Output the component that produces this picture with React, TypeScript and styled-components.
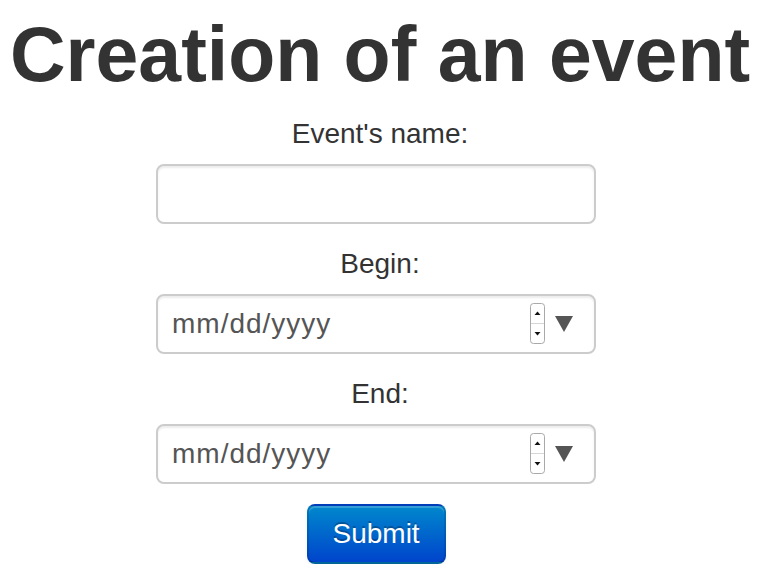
import React from "react";
import styled, { createGlobalStyle } from "styled-components";

const GlobalStyle = createGlobalStyle`
  html, body { margin: 0; padding: 0; background: #fff; }
  body { font-family: "Liberation Sans", Arial, Helvetica, sans-serif; color: #333; }
`;

const Page = styled.div`
  width: 760px;
  display: flex;
  flex-direction: column;
  align-items: center;
  padding-top: 14px;
`;

const Title = styled.h1`
  margin: 0 0 20px;
  font-size: 77px;
  line-height: 80px;
  font-weight: bold;
  color: #333;
  white-space: nowrap;
`;

const Form = styled.form`
  display: flex;
  flex-direction: column;
  align-items: center;
  margin: 0;
`;

const Label = styled.label`
  display: block;
  font-size: 28px;
  line-height: 40px;
  margin-bottom: 10px;
  color: #333;
`;

const fieldBox = `
  width: 440px;
  height: 60px;
  box-sizing: border-box;
  border: 2px solid #ccc;
  border-radius: 8px;
  background: #fff;
  box-shadow: inset 0 2px 2px rgba(0, 0, 0, 0.075);
  margin: 0 8px 20px 0;
`;

const TextInput = styled.input`
  ${fieldBox}
  padding: 8px 12px;
  font-family: inherit;
  font-size: 28px;
  line-height: 40px;
  color: #555;
  outline: none;
`;

const DateBox = styled.div`
  ${fieldBox}
  display: flex;
  align-items: center;
  padding: 0 12px 0 14px;
`;

const DateText = styled.input`
  flex: 1;
  min-width: 0;
  border: none;
  outline: none;
  background: transparent;
  padding: 0;
  font-family: inherit;
  font-size: 28px;
  line-height: 40px;
  letter-spacing: 1px;
  color: #555;
  &::placeholder { color: #555; opacity: 1; }
`;

const SpinnerSvg = styled.svg`
  display: block;
  flex: none;
  margin-right: 10px;
  margin-top: -2px;
`;

const DropSvg = styled.svg`
  display: block;
  flex: none;
  margin-right: 9px;
  margin-top: -1px;
`;

const SubmitButton = styled.button`
  box-sizing: border-box;
  width: 139px;
  height: 60px;
  margin: 0 8px 0 0;
  padding: 8px 24px;
  font-family: inherit;
  font-size: 28px;
  line-height: 40px;
  color: #fff;
  text-shadow: 0 -2px 0 rgba(0, 0, 0, 0.25);
  background: linear-gradient(to bottom, #0088cc, #0044cc);
  border: 2px solid;
  border-color: rgba(0, 0, 0, 0.1) rgba(0, 0, 0, 0.1) rgba(0, 0, 0, 0.25);
  border-radius: 8px;
  box-shadow: inset 0 2px 0 rgba(255, 255, 255, 0.2), 0 2px 4px rgba(0, 0, 0, 0.05);
  cursor: pointer;
`;

const Spinner = () => (
  <SpinnerSvg width="15" height="41" viewBox="0 0 15 41">
    <rect x="0.5" y="0.5" width="14" height="40" rx="3" ry="3" fill="#fff" stroke="#a9a9a9" />
    <line x1="1" y1="20.5" x2="14" y2="20.5" stroke="#d6d6d6" />
    <polygon points="4.5,12 10.5,12 7.5,8.5" fill="#111" />
    <polygon points="4.5,29 10.5,29 7.5,32.5" fill="#111" />
  </SpinnerSvg>
);

const DropArrow = () => (
  <DropSvg width="18" height="16" viewBox="0 0 18 16">
    <polygon points="0,0 18,0 9,16" fill="#555" />
  </DropSvg>
);

const DateField = ({ id }: { id: string }) => (
  <DateBox>
    <DateText id={id} type="text" placeholder="mm/dd/yyyy" />
    <Spinner />
    <DropArrow />
  </DateBox>
);

export default function App() {
  return (
    <>
      <GlobalStyle />
      <Page>
        <Title>Creation of an event</Title>
        <Form onSubmit={(e) => e.preventDefault()}>
          <Label htmlFor="name">Event's name:</Label>
          <TextInput id="name" type="text" />
          <Label htmlFor="begin">Begin:</Label>
          <DateField id="begin" />
          <Label htmlFor="end">End:</Label>
          <DateField id="end" />
          <SubmitButton type="submit">Submit</SubmitButton>
        </Form>
      </Page>
    </>
  );
}
